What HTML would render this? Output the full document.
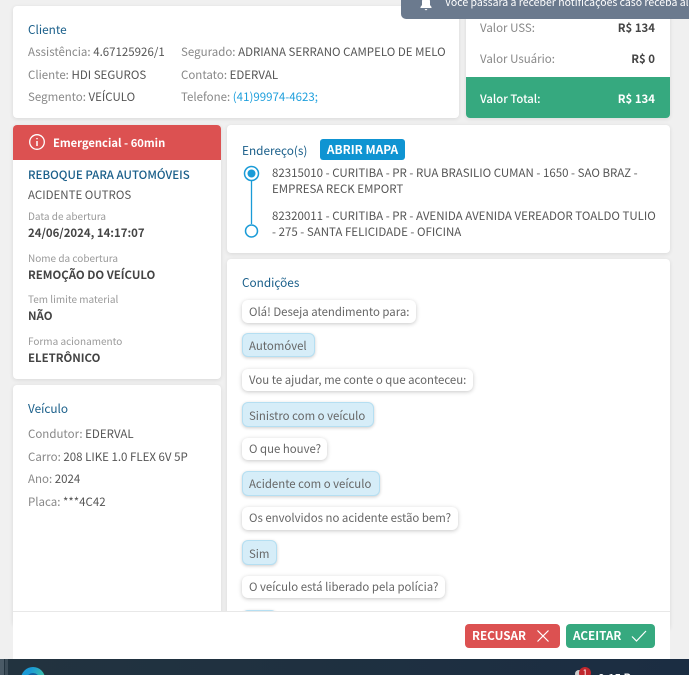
<!DOCTYPE html>
<html lang="pt-BR">
<head>
<meta charset="utf-8">
<title>Atendimento</title>
<style>
html,body{margin:0;padding:0;width:689px;height:675px;overflow:hidden}
body{background:#f0f0f0}
#w{position:absolute;left:0;top:0;width:689px;height:675px;overflow:hidden;background:#f0f0f0;font-family:"Noto Sans CJK JP","Liberation Sans",sans-serif;font-size:11.5px;color:#555}
.c{position:absolute;background:#fff;border-radius:4px;box-shadow:0 1px 4px rgba(0,0,0,.1)}
.t{position:absolute;white-space:nowrap;line-height:16px}
.g{color:#888}
.d{color:#555}
.h{color:#1a5f8a}
.tt{font-size:11.8px}
.b{font-weight:700;color:#444;font-size:11.4px}
.s{font-size:10px;color:#999}
.bub{position:absolute;left:242px;box-sizing:border-box;background:#fff;border-radius:6px;box-shadow:0 1px 4px rgba(0,0,0,.22);white-space:nowrap;line-height:16px;padding-left:7px;color:#666;font-size:11.4px}
.bl{background:#d6edf8;border:1px solid #b5dff2;box-shadow:0 1px 3px rgba(0,0,0,.2);padding-left:6px}
.btn{position:absolute;top:624px;height:24px;border-radius:4px;color:#fff;font-weight:700;line-height:24px;font-size:11.7px}
</style>
</head>
<body>
<div id="w">
<div class="c" style="left:13px;top:6px;width:446px;height:112px"></div>
<div class="t h tt" style="left:28px;top:22px">Cliente</div>
<div class="t" style="left:28px;top:44px"><span class="g">Assistência:</span> <span class="d">4.67125926/1</span></div>
<div class="t" style="left:28px;top:67px"><span class="g">Cliente:</span> <span class="d">HDI SEGUROS</span></div>
<div class="t" style="left:28px;top:89px"><span class="g">Segmento:</span> <span class="d">VEÍCULO</span></div>
<div class="t" style="left:181px;top:44px"><span class="g">Segurado:</span> <span class="d">ADRIANA SERRANO CAMPELO DE MELO</span></div>
<div class="t" style="left:181px;top:67px"><span class="g">Contato:</span> <span class="d">EDERVAL</span></div>
<div class="t" style="left:181px;top:89px"><span class="g">Telefone:</span> <span style="color:#1e9fdc">(41)99974-4623;</span></div>

<div class="c" style="left:466px;top:0;width:204px;height:118px;border-radius:0 0 4px 4px;overflow:hidden">
  <div style="position:absolute;left:0;top:77px;width:204px;height:41px;background:#36a97f"></div>
</div>
<div class="t g" style="left:480px;top:20px">Valor USS:</div>
<div class="t b" style="right:34px;top:20px">R$ 134</div>
<div class="t g" style="left:480px;top:51px">Valor Usuário:</div>
<div class="t b" style="right:34px;top:51px">R$ 0</div>
<div class="t" style="left:480px;top:91px;color:#fff;font-weight:500;font-size:11.3px">Valor Total:</div>
<div class="t" style="right:34px;top:91px;color:#fff;font-weight:700;font-size:11.4px">R$ 134</div>

<div style="position:absolute;left:401px;top:0;width:288px;height:19px;background:#6b7a8e;border-radius:0 0 0 5px;overflow:hidden">
  <svg style="position:absolute;left:18px;top:-3px" width="14" height="14" viewBox="0 0 14 14"><path d="M7 0C4.300 0 3 2 3 4.500V8L1.500 10V11H12.500V10L11 8V4.500C11 2 9.700 0 7 0Z" fill="#fff"/><path d="M5.500 12H8.500L7 13.500Z" fill="#fff"/></svg>
  <div class="t" style="left:44px;top:-5px;color:#fff;font-size:10.5px">Você passará a receber notificações caso receba alguma</div>
</div>

<div class="c" style="left:13px;top:125px;width:208px;height:254px"></div>
<div style="position:absolute;left:13px;top:125px;width:208px;height:35px;background:#dc5151;border-radius:4px 4px 0 0"></div>
<svg style="position:absolute;left:28px;top:133px" width="18" height="18" viewBox="0 0 18 18" fill="none" stroke="#fff"><circle cx="9" cy="9" r="7.300" stroke-width="1.300"/><path d="M9 8V13M9 5V6.300" stroke-width="1.500"/></svg>
<div class="t" style="left:53px;top:135px;color:#fff;font-weight:700;font-size:11.2px">Emergencial - 60min</div>
<div class="t h" style="left:28px;top:167px;font-weight:500">REBOQUE PARA AUTOMÓVEIS</div>
<div class="t d" style="left:28px;top:187px">ACIDENTE OUTROS</div>
<div class="t s" style="left:28px;top:208px">Data de abertura</div>
<div class="t b" style="left:28px;top:225px">24/06/2024, 14:17:07</div>
<div class="t s" style="left:28px;top:250px">Nome da cobertura</div>
<div class="t b" style="left:28px;top:267px">REMOÇÃO DO VEÍCULO</div>
<div class="t s" style="left:28px;top:291px">Tem limite material</div>
<div class="t b" style="left:28px;top:308px">NÃO</div>
<div class="t s" style="left:28px;top:333px">Forma acionamento</div>
<div class="t b" style="left:28px;top:350px">ELETRÔNICO</div>

<div class="c" style="left:13px;top:385px;width:208px;height:240px"></div>
<div class="t h tt" style="left:28px;top:401px">Veículo</div>
<div class="t" style="left:28px;top:426px"><span class="g">Condutor:</span> <span class="d">EDERVAL</span></div>
<div class="t" style="left:28px;top:449px"><span class="g">Carro:</span> <span class="d">208 LIKE 1.0 FLEX 6V 5P</span></div>
<div class="t" style="left:28px;top:471px"><span class="g">Ano:</span> <span class="d">2024</span></div>
<div class="t" style="left:28px;top:494px"><span class="g">Placa:</span> <span class="d">***4C42</span></div>

<div class="c" style="left:227px;top:125px;width:443px;height:128px"></div>
<div class="t h tt" style="left:242px;top:143px">Endereço(s)</div>
<div style="position:absolute;left:320px;top:139px;width:85px;height:21px;background:#0f94d2;border-radius:3px;color:#fff;font-weight:700;text-align:center;line-height:22px;font-size:11.9px">ABRIR MAPA</div>
<svg style="position:absolute;left:240px;top:162px" width="24" height="80" viewBox="0 0 24 80" fill="none" stroke="#1a9bd7"><path d="M11.500 19V62" stroke-width="1.300"/><circle cx="11.500" cy="11.500" r="7" stroke-width="1.500"/><circle cx="11.500" cy="11.500" r="4" fill="#1a9bd7" stroke="none"/><circle cx="11.500" cy="69" r="6" stroke-width="1.500"/></svg>
<div class="t d" style="left:272px;top:165px">82315010 - CURITIBA - PR - RUA BRASILIO CUMAN - 1650 - SAO BRAZ -</div>
<div class="t d" style="left:272px;top:181px">EMPRESA RECK EMPORT</div>
<div class="t d" style="left:272px;top:208px">82320011 - CURITIBA - PR - AVENIDA AVENIDA VEREADOR TOALDO TULIO</div>
<div class="t d" style="left:272px;top:224px">- 275 - SANTA FELICIDADE - OFICINA</div>

<div class="c" style="left:227px;top:259px;width:443px;height:370px"></div>
<div class="t h tt" style="left:242px;top:275px">Condições</div>
<div class="bub" style="top:300px;width:174px;height:23px;line-height:25px">Olá! Deseja atendimento para:</div>
<div class="bub bl" style="top:333px;width:73px;height:24px;line-height:24px">Automóvel</div>
<div class="bub" style="top:369px;width:231px;height:22px;line-height:22px">Vou te ajudar, me conte o que aconteceu:</div>
<div class="bub bl" style="top:402px;width:132px;height:25px;line-height:26px">Sinistro com o veículo</div>
<div class="bub" style="top:438px;width:85px;height:22px;line-height:22px">O que houve?</div>
<div class="bub bl" style="top:471px;width:138px;height:25px;line-height:25px">Acidente com o veículo</div>
<div class="bub" style="top:507px;width:216px;height:23px;line-height:23px">Os envolvidos no acidente estão bem?</div>
<div class="bub bl" style="top:540px;width:35px;height:25px;line-height:26px">Sim</div>
<div class="bub" style="top:576px;width:203px;height:22px;line-height:22px">O veículo está liberado pela polícia?</div>
<div class="bub bl" style="top:610px;width:35px;height:25px"></div>

<div style="position:absolute;left:13px;top:611px;width:657px;height:48px;background:#fff;border-top:1px solid #e8e8e8;box-sizing:border-box"></div>
<div class="btn" style="left:465px;width:95px;background:#dc5151"><span style="position:absolute;left:7px">RECUSAR</span>
  <svg style="position:absolute;left:71px;top:5px" width="14" height="14" viewBox="0 0 14 14" fill="none" stroke="#fff" stroke-width="1.200"><path d="M1.500 1.500L12.500 12.500M12.500 1.500L1.500 12.500"/></svg>
</div>
<div class="btn" style="left:566px;width:89px;background:#36a97f"><span style="position:absolute;left:7px">ACEITAR</span>
  <svg style="position:absolute;left:65px;top:5px" width="16" height="14" viewBox="0 0 16 14" fill="none" stroke="#fff" stroke-width="1.200"><path d="M1 7.500L5.500 12L15 2"/></svg>
</div>

<div style="position:absolute;left:0;top:659px;width:689px;height:16px;background:linear-gradient(90deg,#22333f,#1b2d42)"></div>
<div style="position:absolute;left:0;top:659px;width:4px;height:16px;background:#4a5a66"></div>
<div style="position:absolute;left:5px;top:659px;width:3px;height:16px;background:#3c4c58"></div>
<div style="position:absolute;left:21px;top:667px;width:24px;height:24px;border-radius:50%;background:linear-gradient(120deg,#1a9ad6 30%,#4fd68e)"></div>
<div style="position:absolute;left:27px;top:673px;width:12px;height:10px;border-radius:50%;background:#15609e"></div>
<div style="position:absolute;left:575px;top:670px;width:8px;height:8px;border-radius:50%;background:#ccc"></div>
<div style="position:absolute;left:579px;top:667px;width:12px;height:12px;border-radius:50%;background:#c0272d;color:#fff;font-size:9px;line-height:12px;text-align:center">1</div>
<div class="t" style="left:598px;top:670px;color:#fff;font-size:11px;font-weight:700">8:15 P</div>
</div>
</body>
</html>
